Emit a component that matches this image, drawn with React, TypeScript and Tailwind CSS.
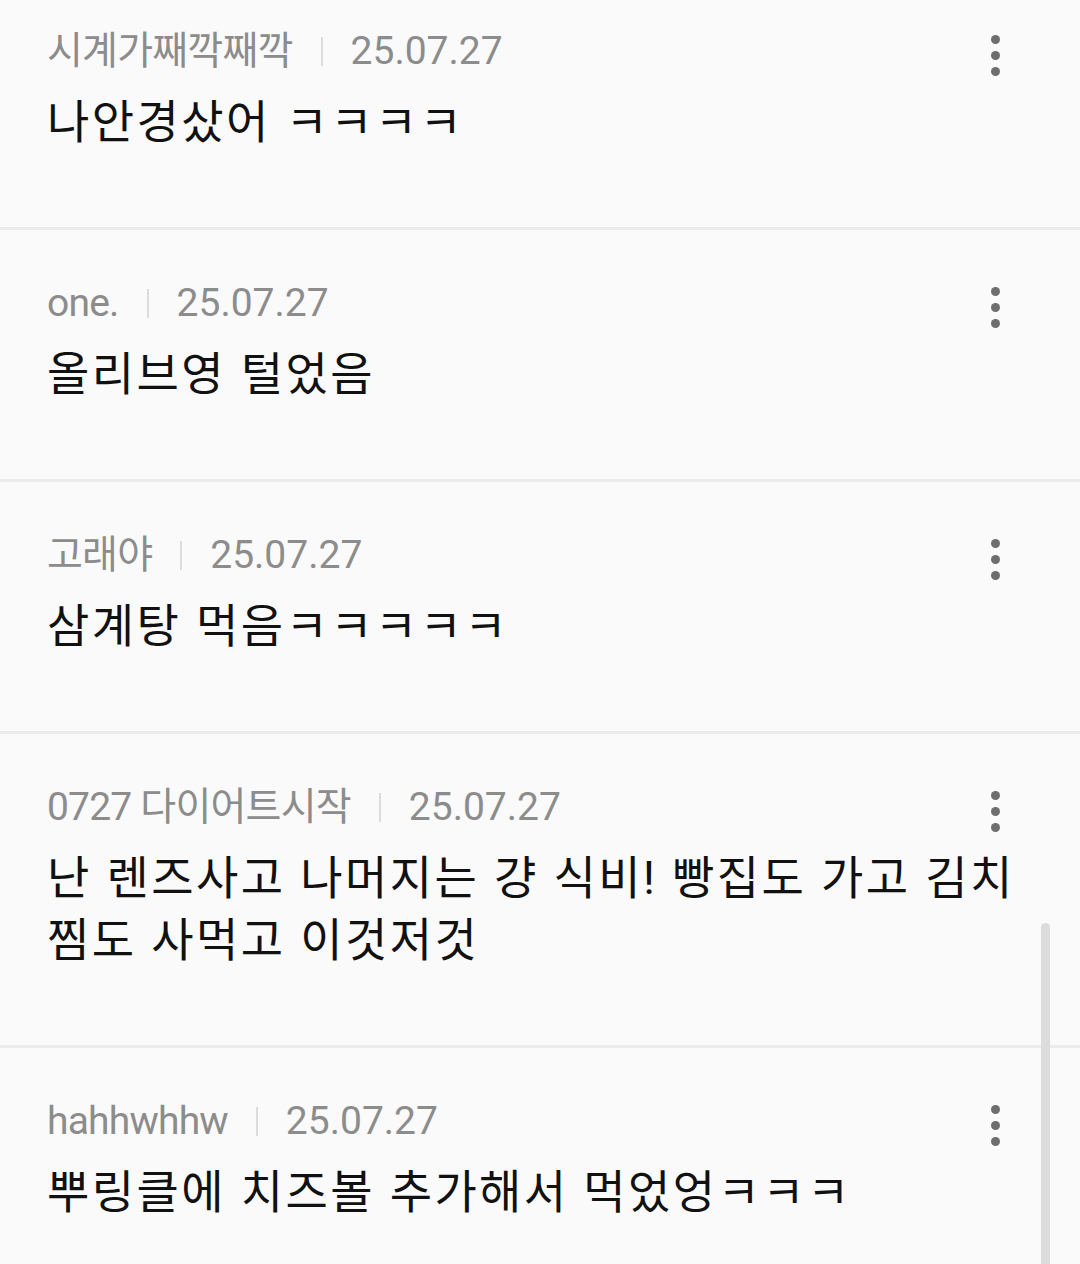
import React from "react";

type Comment = {
  author: string;
  date: string;
  body: string;
};

const COMMENTS: Comment[] = [
  { author: "시계가째깍째깍", date: "25.07.27", body: "나안경샀어 ㅋㅋㅋㅋ" },
  { author: "one.", date: "25.07.27", body: "올리브영 털었음" },
  { author: "고래야", date: "25.07.27", body: "삼계탕 먹음ㅋㅋㅋㅋㅋ" },
  {
    author: "0727 다이어트시작",
    date: "25.07.27",
    body: "난 렌즈사고 나머지는 걍 식비! 빵집도 가고 김치찜도 사먹고 이것저것",
  },
  { author: "hahhwhhw", date: "25.07.27", body: "뿌링클에 치즈볼 추가해서 먹었엉ㅋㅋㅋ" },
];

const FONT = "font-['Roboto','Noto_Sans_CJK_KR',sans-serif]";

function MoreButton() {
  return (
    <button className="absolute right-[33px] top-[6px] flex flex-col items-center gap-[7px]">
      <span className="block h-[9px] w-[9px] rounded-full bg-[#6e6e6e]" />
      <span className="block h-[9px] w-[9px] rounded-full bg-[#6e6e6e]" />
      <span className="block h-[9px] w-[9px] rounded-full bg-[#6e6e6e]" />
    </button>
  );
}

function CommentItem({ comment, first }: { comment: Comment; first?: boolean }) {
  return (
    <div
      className={`border-b-[3px] border-[#ececec] px-[47px] pb-[74px] ${first ? "pt-[29px]" : "pt-[51px]"}`}
    >
      <div className="relative flex h-[44px] items-center text-[39px] text-[#8c8c8c]">
        <span className="tracking-[-0.8px]">{comment.author}</span>
        <span className="mx-[28px] h-[29px] w-[2px] bg-[#dcdcdc]" />
        <span>{comment.date}</span>
        <MoreButton />
      </div>
      <p className="mt-[18px] text-[46px] leading-[62px] tracking-[2.4px] text-[#111111] [word-spacing:1px]">
        {comment.body}
      </p>
    </div>
  );
}

export default function App() {
  return (
    <div className={`relative h-[1264px] w-[1080px] overflow-hidden bg-[#fafafa] ${FONT}`}>
      {COMMENTS.map((c, i) => (
        <CommentItem key={i} comment={c} first={i === 0} />
      ))}
      <div className="absolute right-[30px] top-[923px] h-[400px] w-[9px] rounded-full bg-[#dcdcdc]" />
    </div>
  );
}
